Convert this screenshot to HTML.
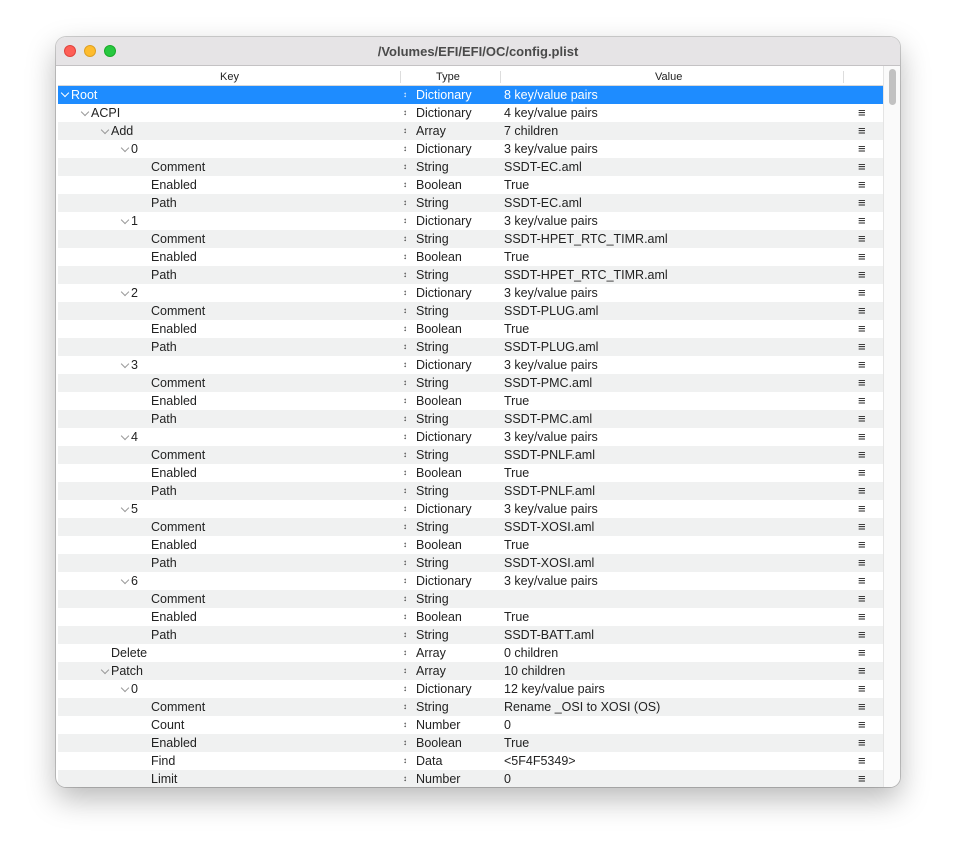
<!DOCTYPE html>
<html><head><meta charset="utf-8"><style>
*{margin:0;padding:0;box-sizing:border-box}
body{width:956px;height:861px;background:#fff;font-family:"Liberation Sans",sans-serif;position:relative;overflow:hidden}
.win{position:absolute;left:56px;top:37px;width:844px;height:750px;border-radius:10px;background:#fff;box-shadow:0 12px 30px rgba(0,0,0,.28),0 0 0 1px rgba(0,0,0,.18);overflow:hidden}
.tb{position:absolute;left:0;top:0;width:844px;height:29px;background:#e6e4e6;border-bottom:1px solid #c4c2c4;text-align:center;font-size:13px;font-weight:bold;color:#4a4a4a;line-height:29px}
.dot{position:absolute;top:8px;width:12px;height:12px;border-radius:50%}
.hdr{position:absolute;left:2px;top:30px;width:825px;height:19px;border-bottom:1px solid #d8d8d8;font-size:11px;color:#222;background:#fff}
.hdr span{position:absolute;top:4px}
.sep{position:absolute;top:4px;width:1px;height:12px;background:#ddd}
.rows{position:absolute;left:2px;top:49px;width:825px}
.r{height:18px;position:relative;font-size:12.5px;color:#222;line-height:18px;white-space:nowrap;background:#fff}
.r:nth-child(odd){background:#f0f1f1}
.r.sel{background:#1e8cff;color:#fff}
.k{position:absolute}
.cv{position:absolute;top:5px;width:6px;height:6px;border-right:1px solid #999;border-bottom:1px solid #999;transform:rotate(45deg)}
.sel .cv{border-color:#fff}
.t{position:absolute;left:358px}
.t:before{content:"\2195";position:absolute;left:-13px;top:0;font-size:8px;font-weight:bold}
.v{position:absolute;left:446px}
.m{position:absolute;left:800px;font-size:13px}
.sb{position:absolute;left:827px;top:29px;width:17px;height:721px;background:#fafafa;border-left:1px solid #e4e4e4}
.th{position:absolute;left:5px;top:3px;width:7px;height:36px;border-radius:4px;background:#c2c2c2}
</style></head><body>
<div class="win">
<div class="tb">/Volumes/EFI/EFI/OC/config.plist
<div class="dot" style="left:8px;background:#fe5f57;border:1px solid #e0443e"></div>
<div class="dot" style="left:28px;background:#febc2e;border:1px solid #dea123"></div>
<div class="dot" style="left:48px;background:#28c840;border:1px solid #1aab29"></div>
</div>
<div class="hdr"><span style="left:162px">Key</span><div class="sep" style="left:342px"></div><span style="left:378px">Type</span><div class="sep" style="left:442px"></div><span style="left:597px">Value</span><div class="sep" style="left:785px"></div></div>
<div class="rows">
<div class="r sel"><div class="cv" style="left:4px;top:4px"></div><span class="k" style="left:13px">Root</span><span class="t">Dictionary</span><span class="v">8 key/value pairs</span></div>
<div class="r"><div class="cv" style="left:24px"></div><span class="k" style="left:33px">ACPI</span><span class="t">Dictionary</span><span class="v">4 key/value pairs</span><span class="m">≡</span></div>
<div class="r"><div class="cv" style="left:44px"></div><span class="k" style="left:53px">Add</span><span class="t">Array</span><span class="v">7 children</span><span class="m">≡</span></div>
<div class="r"><div class="cv" style="left:64px"></div><span class="k" style="left:73px">0</span><span class="t">Dictionary</span><span class="v">3 key/value pairs</span><span class="m">≡</span></div>
<div class="r"><span class="k" style="left:93px">Comment</span><span class="t">String</span><span class="v">SSDT-EC.aml</span><span class="m">≡</span></div>
<div class="r"><span class="k" style="left:93px">Enabled</span><span class="t">Boolean</span><span class="v">True</span><span class="m">≡</span></div>
<div class="r"><span class="k" style="left:93px">Path</span><span class="t">String</span><span class="v">SSDT-EC.aml</span><span class="m">≡</span></div>
<div class="r"><div class="cv" style="left:64px"></div><span class="k" style="left:73px">1</span><span class="t">Dictionary</span><span class="v">3 key/value pairs</span><span class="m">≡</span></div>
<div class="r"><span class="k" style="left:93px">Comment</span><span class="t">String</span><span class="v">SSDT-HPET_RTC_TIMR.aml</span><span class="m">≡</span></div>
<div class="r"><span class="k" style="left:93px">Enabled</span><span class="t">Boolean</span><span class="v">True</span><span class="m">≡</span></div>
<div class="r"><span class="k" style="left:93px">Path</span><span class="t">String</span><span class="v">SSDT-HPET_RTC_TIMR.aml</span><span class="m">≡</span></div>
<div class="r"><div class="cv" style="left:64px"></div><span class="k" style="left:73px">2</span><span class="t">Dictionary</span><span class="v">3 key/value pairs</span><span class="m">≡</span></div>
<div class="r"><span class="k" style="left:93px">Comment</span><span class="t">String</span><span class="v">SSDT-PLUG.aml</span><span class="m">≡</span></div>
<div class="r"><span class="k" style="left:93px">Enabled</span><span class="t">Boolean</span><span class="v">True</span><span class="m">≡</span></div>
<div class="r"><span class="k" style="left:93px">Path</span><span class="t">String</span><span class="v">SSDT-PLUG.aml</span><span class="m">≡</span></div>
<div class="r"><div class="cv" style="left:64px"></div><span class="k" style="left:73px">3</span><span class="t">Dictionary</span><span class="v">3 key/value pairs</span><span class="m">≡</span></div>
<div class="r"><span class="k" style="left:93px">Comment</span><span class="t">String</span><span class="v">SSDT-PMC.aml</span><span class="m">≡</span></div>
<div class="r"><span class="k" style="left:93px">Enabled</span><span class="t">Boolean</span><span class="v">True</span><span class="m">≡</span></div>
<div class="r"><span class="k" style="left:93px">Path</span><span class="t">String</span><span class="v">SSDT-PMC.aml</span><span class="m">≡</span></div>
<div class="r"><div class="cv" style="left:64px"></div><span class="k" style="left:73px">4</span><span class="t">Dictionary</span><span class="v">3 key/value pairs</span><span class="m">≡</span></div>
<div class="r"><span class="k" style="left:93px">Comment</span><span class="t">String</span><span class="v">SSDT-PNLF.aml</span><span class="m">≡</span></div>
<div class="r"><span class="k" style="left:93px">Enabled</span><span class="t">Boolean</span><span class="v">True</span><span class="m">≡</span></div>
<div class="r"><span class="k" style="left:93px">Path</span><span class="t">String</span><span class="v">SSDT-PNLF.aml</span><span class="m">≡</span></div>
<div class="r"><div class="cv" style="left:64px"></div><span class="k" style="left:73px">5</span><span class="t">Dictionary</span><span class="v">3 key/value pairs</span><span class="m">≡</span></div>
<div class="r"><span class="k" style="left:93px">Comment</span><span class="t">String</span><span class="v">SSDT-XOSI.aml</span><span class="m">≡</span></div>
<div class="r"><span class="k" style="left:93px">Enabled</span><span class="t">Boolean</span><span class="v">True</span><span class="m">≡</span></div>
<div class="r"><span class="k" style="left:93px">Path</span><span class="t">String</span><span class="v">SSDT-XOSI.aml</span><span class="m">≡</span></div>
<div class="r"><div class="cv" style="left:64px"></div><span class="k" style="left:73px">6</span><span class="t">Dictionary</span><span class="v">3 key/value pairs</span><span class="m">≡</span></div>
<div class="r"><span class="k" style="left:93px">Comment</span><span class="t">String</span><span class="v"></span><span class="m">≡</span></div>
<div class="r"><span class="k" style="left:93px">Enabled</span><span class="t">Boolean</span><span class="v">True</span><span class="m">≡</span></div>
<div class="r"><span class="k" style="left:93px">Path</span><span class="t">String</span><span class="v">SSDT-BATT.aml</span><span class="m">≡</span></div>
<div class="r"><span class="k" style="left:53px">Delete</span><span class="t">Array</span><span class="v">0 children</span><span class="m">≡</span></div>
<div class="r"><div class="cv" style="left:44px"></div><span class="k" style="left:53px">Patch</span><span class="t">Array</span><span class="v">10 children</span><span class="m">≡</span></div>
<div class="r"><div class="cv" style="left:64px"></div><span class="k" style="left:73px">0</span><span class="t">Dictionary</span><span class="v">12 key/value pairs</span><span class="m">≡</span></div>
<div class="r"><span class="k" style="left:93px">Comment</span><span class="t">String</span><span class="v">Rename _OSI to XOSI (OS)</span><span class="m">≡</span></div>
<div class="r"><span class="k" style="left:93px">Count</span><span class="t">Number</span><span class="v">0</span><span class="m">≡</span></div>
<div class="r"><span class="k" style="left:93px">Enabled</span><span class="t">Boolean</span><span class="v">True</span><span class="m">≡</span></div>
<div class="r"><span class="k" style="left:93px">Find</span><span class="t">Data</span><span class="v">&lt;5F4F5349&gt;</span><span class="m">≡</span></div>
<div class="r"><span class="k" style="left:93px">Limit</span><span class="t">Number</span><span class="v">0</span><span class="m">≡</span></div>
</div>
<div class="sb"><div class="th"></div></div>
</div>
</body></html>
